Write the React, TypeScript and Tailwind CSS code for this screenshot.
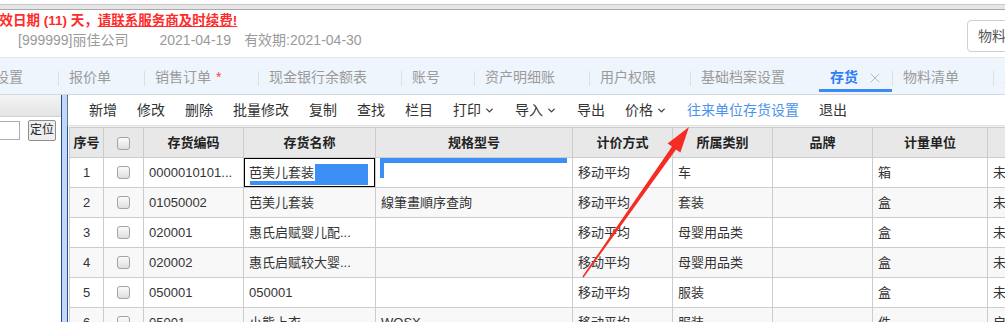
import { ChevronDown, X } from 'lucide-react';

const FONT = "[font-family:'Liberation_Sans','Noto_Sans_CJK_SC',sans-serif]";

const tabs = [
  { label: '设置', w: 'w-[73px]' },
  { label: '报价单', w: 'w-[85px]' },
  { label: '销售订单', w: 'w-[113px]', star: true },
  { label: '现金银行余额表', w: 'w-[142px]' },
  { label: '账号', w: 'w-[72px]' },
  { label: '资产明细账', w: 'w-[114px]' },
  { label: '用户权限', w: 'w-[100px]' },
  { label: '基础档案设置', w: 'w-[128px]', noSep: true },
  { label: '存货', w: 'w-[73px]', active: true },
  { label: '物料清单', w: 'w-[100px]' },
  { label: '生产订单', w: 'w-[100px]' },
];

const tools = [
  { label: '新增' },
  { label: '修改' },
  { label: '删除' },
  { label: '批量修改' },
  { label: '复制' },
  { label: '查找' },
  { label: '栏目' },
  { label: '打印', menu: true },
  { label: '导入', menu: true },
  { label: '导出' },
  { label: '价格', menu: true },
  { label: '往来单位存货设置', link: true },
  { label: '退出' },
];

const cols = [
  { title: '序号', w: 'w-[34px]', center: true },
  { title: '', w: 'w-[40px]', check: true },
  { title: '存货编码', w: 'w-[100px]' },
  { title: '存货名称', w: 'w-[132px]' },
  { title: '规格型号', w: 'w-[197px]' },
  { title: '计价方式', w: 'w-[100px]' },
  { title: '所属类别', w: 'w-[100px]' },
  { title: '品牌', w: 'w-[100px]' },
  { title: '计量单位', w: 'w-[115px]' },
  { title: '是否停用', w: 'w-[100px]' },
];

const rows = [
  ['1', '', '0000010101...', '芭美儿套装', '', '移动平均', '车', '', '箱', '未启用'],
  ['2', '', '01050002', '芭美儿套装', '線筆畫順序查詢', '移动平均', '套装', '', '盒', '未启用'],
  ['3', '', '020001', '惠氏启赋婴儿配...', '', '移动平均', '母婴用品类', '', '盒', '未启用'],
  ['4', '', '020002', '惠氏启赋较大婴...', '', '移动平均', '母婴用品类', '', '盒', '未启用'],
  ['5', '', '050001', '050001', '', '移动平均', '服装', '', '盒', '未启用'],
  ['6', '', '05001', '小熊上衣', 'WOSX', '移动平均', '服装', '', '件', '启用'],
];

const CheckBox = () => (
  <span className="block w-[13px] h-[13px] rounded-[3px] border border-[#a3a3a3] bg-linear-to-b from-[#fbfbfb] to-[#dedede]"></span>
);

export default function App() {
  return (
    <div className={`relative w-[1005px] h-[322px] overflow-hidden bg-white text-[#333] ${FONT}`}>
      {/* top strip */}
      <div className="h-[4px] bg-white"></div>
      <div className="h-[6px] bg-[#e6e6e6] border-t border-b border-t-[#c8c8c8] border-b-[#a9a9a9]"></div>

      {/* notice header */}
      <div className="flex h-[48px] border-b border-[#e6e6e6]">
        <div className="w-[967px] shrink-0 pt-px">
          <div className="h-[20px] leading-[20px] ml-[-14px] text-[13.5px] font-bold text-[#ff2b2b] whitespace-nowrap">
            有效日期 (11) 天，<span className="underline">请联系服务商及时续费!</span>
          </div>
          <div className="h-[18px] leading-[18px] pl-[18px] text-[14px] text-[#9a9a9a] whitespace-nowrap flex">
            <span>[999999]丽佳公司</span>
            <span className="ml-[31px]">2021-04-19</span>
            <span className="ml-[13px]">有效期:2021-04-30</span>
          </div>
        </div>
        <div className="shrink-0 mt-[10px] h-[32px] pl-[10px] pr-[10px] border border-[#cfcfcf] rounded-[4px] flex items-center text-[14px] text-[#555] whitespace-nowrap">
          物料查询
        </div>
      </div>

      {/* tab bar */}
      <div className="h-[37px] bg-[#eff5fd] border-b border-[#d6d9de] flex ml-[-15px] whitespace-nowrap">
        {tabs.map((t) => (
          <div key={t.label} className="flex items-center shrink-0">
            <div className={`relative ${t.w} h-full flex items-center pt-[3px] pl-[10px] text-[14px] ${t.active ? 'text-[#2f7df5] font-bold pl-[11px]' : 'text-[#9b9b9b]'}`}>
              <span>{t.label}</span>
              {t.star && <span className="pl-[5px] text-[#ff3b3b]">*</span>}
              {t.active && <X size={16} strokeWidth={1.4} className="ml-[9px] text-[#b5b5b5]" />}
              {t.active && <span className="absolute left-0 right-0 bottom-[2px] h-[3px] bg-[#3b8bf5]"></span>}
            </div>
            {!t.noSep && <span className="w-px h-[15px] mt-[4px] bg-[#dcdfe3]"></span>}
          </div>
        ))}
      </div>

      <div className="flex">
        {/* left tree panel */}
        <div className="w-[61px] shrink-0 h-[240px] bg-white">
          <div className="h-[22px] bg-linear-to-b from-[#f4f4f4] to-[#e4e4e4] border-b border-[#d2d2d2]"></div>
          <div className="flex items-center mt-[3px] ml-[-10px]">
            <div className="w-[30px] h-[19px] border border-[#adadad] bg-white"></div>
            <div className="ml-[8px] w-[28px] h-[21px] border border-[#8d8d8d] rounded-[2px] bg-[#efefef] text-[12px] leading-[19px] text-center text-[#222]">定位</div>
          </div>
        </div>

        {/* splitter */}
        <div className="w-[7px] shrink-0 h-[240px] border-l border-r border-[#1f4f9e] bg-[#c4d8f3]"></div>

        {/* main */}
        <div className="flex-1 min-w-0">
          <div className="h-[30px] flex items-center pl-[21px] text-[14px] whitespace-nowrap shadow-[0_1px_2px_#d4d4d4]">
            {tools.map((t, i) => (
              <span key={t.label} className={`flex items-center ${i > 0 ? 'ml-[20px]' : ''} ${t.link ? 'text-[#4b93ea]' : 'text-[#333]'}`}>
                {t.label}
                {t.menu && <ChevronDown size={11} strokeWidth={3} className="ml-[3px] text-[#444]" />}
              </span>
            ))}
          </div>

          <div className="mt-[2px] ml-px border-l border-[#cccccc] w-[1100px] text-[13px] whitespace-nowrap">
            {/* header */}
            <div className="flex h-[31px] bg-[#e8e8e8] border-t border-b border-[#cccccc]">
              {cols.map((c) => (
                <div key={c.w + c.title} className={`${c.w} shrink-0 border-r border-[#cccccc] flex items-center justify-center font-bold text-[#222]`}>
                  {c.check ? <span className="mt-[2px]"><CheckBox /></span> : c.title}
                </div>
              ))}
            </div>
            {rows.map((r, ri) => (
              <div key={ri} className={`flex h-[30px] border-b border-[#cccccc] ${ri % 2 === 1 ? 'bg-[#f8f8f8]' : 'bg-white'}`}>
                {cols.map((c, ci) => (
                  <div key={ci} className={`relative ${c.w} shrink-0 border-r border-[#cccccc] flex items-center overflow-hidden ${c.center || c.check ? 'justify-center' : 'pl-[5px]'}`}>
                    {c.check ? <CheckBox /> : <span>{r[ci]}</span>}
                    {ri === 0 && ci === 3 && (
                      <>
                        <span className="absolute left-0 top-0 right-0 bottom-0 border border-black"></span>
                        <span className="absolute left-[71px] top-[6px] w-[53px] h-[20px] bg-[#3b8ff5]"></span>
                        <span className="absolute left-[6px] top-[23px] w-[118px] h-[4px] bg-[#3b8ff5]"></span>
                      </>
                    )}
                    {ri === 0 && ci === 4 && (
                      <>
                        <span className="absolute left-[4px] top-0 w-[187px] h-[5px] bg-[#3b8ff5]"></span>
                        <span className="absolute left-[4px] top-0 w-[4px] h-[20px] bg-[#3b8ff5]"></span>
                      </>
                    )}
                  </div>
                ))}
              </div>
            ))}
          </div>
        </div>
      </div>

      {/* annotation arrow */}
      <svg className="absolute left-0 top-0 pointer-events-none" width="1005" height="322" viewBox="0 0 1005 322">
        <polygon
          points="582.4,276.6 672,146.6 667.6,143.4 689,127 680.4,152.6 676,149.4 583.6,277.4"
          fill="#f62b24"
        />
      </svg>
    </div>
  );
}
